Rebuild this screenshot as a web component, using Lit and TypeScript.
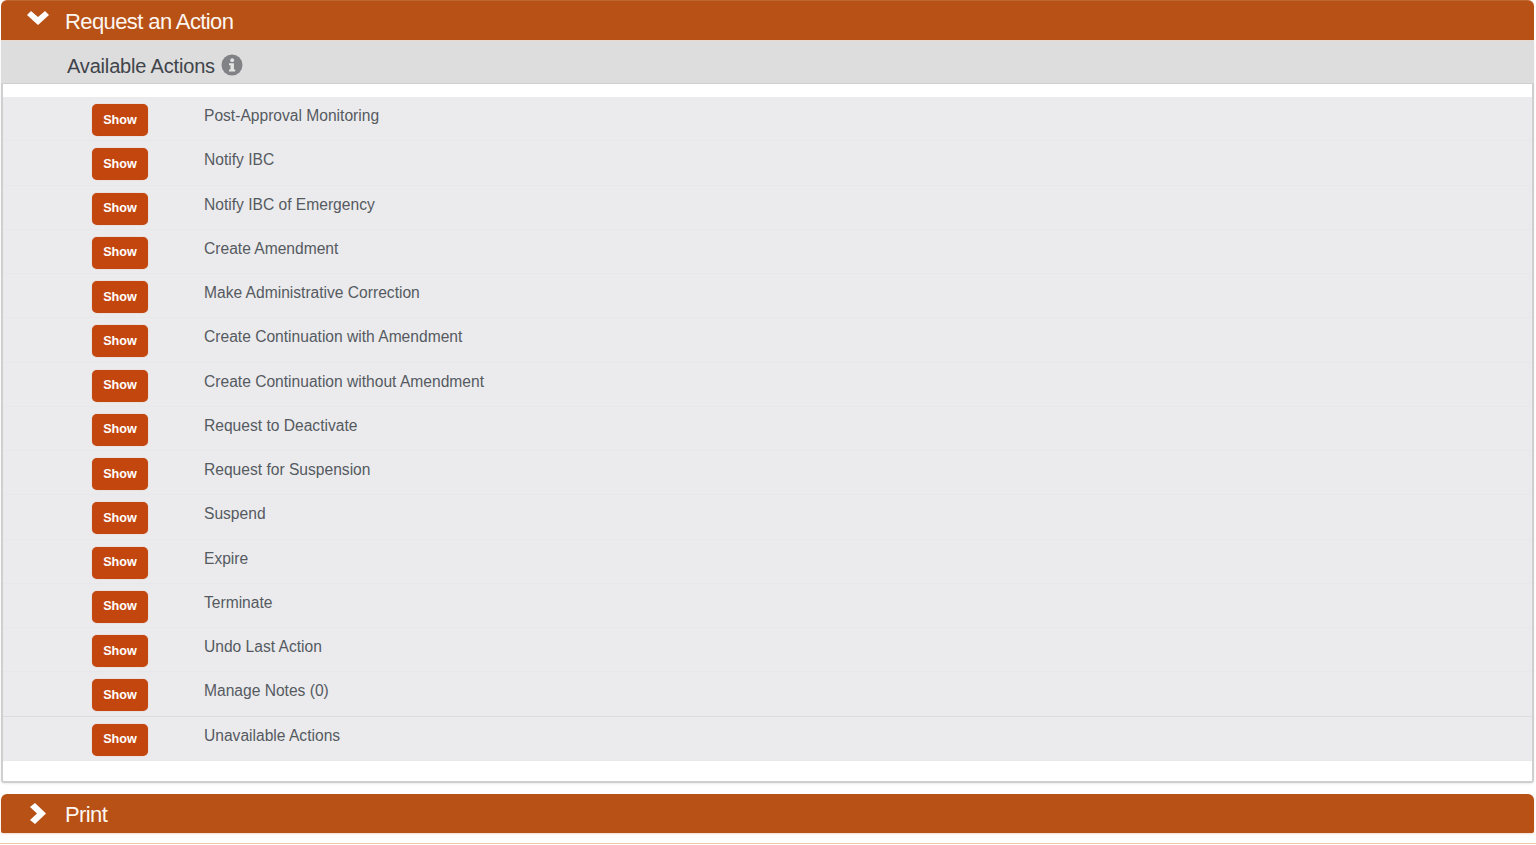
import { LitElement, html, css } from "lit";
import { customElement } from "lit/decorators.js";

const ACTIONS = [
  "Post-Approval Monitoring",
  "Notify IBC",
  "Notify IBC of Emergency",
  "Create Amendment",
  "Make Administrative Correction",
  "Create Continuation with Amendment",
  "Create Continuation without Amendment",
  "Request to Deactivate",
  "Request for Suspension",
  "Suspend",
  "Expire",
  "Terminate",
  "Undo Last Action",
  "Manage Notes (0)",
  "Unavailable Actions",
];

@customElement("app-root")
export class AppRoot extends LitElement {
  static styles = css`
    :host {
      display: block;
      height: 845px;
      overflow: hidden;
      background: #fff;
      font-family: "Liberation Sans", Arial, sans-serif;
    }
    .bar {
      height: 40px;
      margin: 0 2px 0 1px;
      padding-top: 4px;
      box-sizing: border-box;
      background: #b85116;
      color: #fdf6f0;
      border-radius: 6px 6px 0 0;
      box-shadow: inset 0 1px 0 rgba(255, 255, 255, 0.12);
      display: flex;
      align-items: center;
      font-size: 22px;
      letter-spacing: -0.6px;
    }
    .bar.print {
      height: 39px;
      padding-top: 3px;
      border-radius: 6px 6px 2px 2px;
      box-shadow: 0 1px 2px rgba(184, 81, 22, 0.2);
    }
    .chev {
      width: 64px;
      flex: none;
      display: flex;
      justify-content: center;
      padding-left: 10px;
      box-sizing: border-box;
    }
    .chev svg {
      display: block;
      fill: #fff;
    }
    .chev.down svg {
      margin-top: -10px;
    }
    .chev.right svg {
      margin-top: -3px;
    }
    .panel {
      margin: 0 2px 0 1px;
      border: solid #cfcfcf;
      border-width: 0 2px 2px 2px;
      border-radius: 0 0 3px 3px;
      padding-bottom: 20px;
      box-shadow: 0 1px 2px rgba(0, 0, 0, 0.08);
    }
    .sub {
      height: 44px;
      margin: 0 -2px;
      padding: 8px 0 0 66px;
      background: #dddddd;
      border-top: 1px solid #e8d9cf;
      border-bottom: 1px solid #d0d0d0;
      box-sizing: border-box;
      display: flex;
      align-items: center;
      gap: 6px;
      color: #3f444a;
      font-size: 20px;
      letter-spacing: -0.17px;
    }
    .sub svg {
      display: block;
      margin-top: -3px;
    }
    .list {
      margin-top: 13px;
    }
    .row {
      height: 44.27px;
      box-sizing: border-box;
      background: #ebebed;
      border-bottom: 1px solid #e8e8ea;
      display: flex;
      align-items: flex-start;
      padding-left: 89px;
    }
    .row:nth-last-child(2) {
      border-bottom-color: #dcdcde;
    }
    .btn {
      width: 56px;
      height: 32px;
      margin-top: 7px;
      padding: 0 0 1px;
      box-sizing: border-box;
      border: none;
      border-radius: 5px;
      background: #c4460f;
      color: #fff;
      font: bold 12.6px "Liberation Sans", Arial, sans-serif;
      box-shadow: 0 0 1px rgba(200, 69, 15, 0.5);
      flex: none;
    }
    .label {
      margin: 10px 0 0 56px;
      font-size: 15.6px;
      line-height: 18px;
      color: #555a61;
    }
    .gap {
      height: 11px;
    }
    .rule {
      height: 1px;
      margin-top: 10px;
      background: #f3c6a8;
    }
  `;

  render() {
    return html`
      <div class="bar">
        <span class="chev down">
          <svg width="22" height="15" viewBox="0 0 22 15" aria-hidden="true">
            <path d="M0 5 4 1 11 7 18 1 22 5 11 15z" />
          </svg>
        </span>
        Request an Action
      </div>
      <div class="panel">
        <div class="sub">
          Available Actions
          <svg width="22" height="22" viewBox="0 0 22 22" aria-hidden="true">
            <circle cx="11" cy="11" r="10.5" fill="#808285" />
            <circle cx="11.2" cy="6.2" r="1.9" fill="#e4e4e4" />
            <path
              d="M8 9.3h4.9v6.2h1.3v2H8v-2h1.5v-4.2H8z"
              fill="#e4e4e4"
            />
          </svg>
        </div>
        <div class="list">
          ${ACTIONS.map(
            (a) => html`<div class="row">
              <button class="btn">Show</button>
              <span class="label">${a}</span>
            </div>`
          )}
        </div>
      </div>
      <div class="gap"></div>
      <div class="bar print">
        <span class="chev right">
          <svg width="16" height="21" viewBox="0 0 16 21" aria-hidden="true">
            <path d="M5 0 16 10.5 5 21 0 17 7 10.5 0 4z" />
          </svg>
        </span>
        Print
      </div>
      <div class="rule"></div>
    `;
  }
}
